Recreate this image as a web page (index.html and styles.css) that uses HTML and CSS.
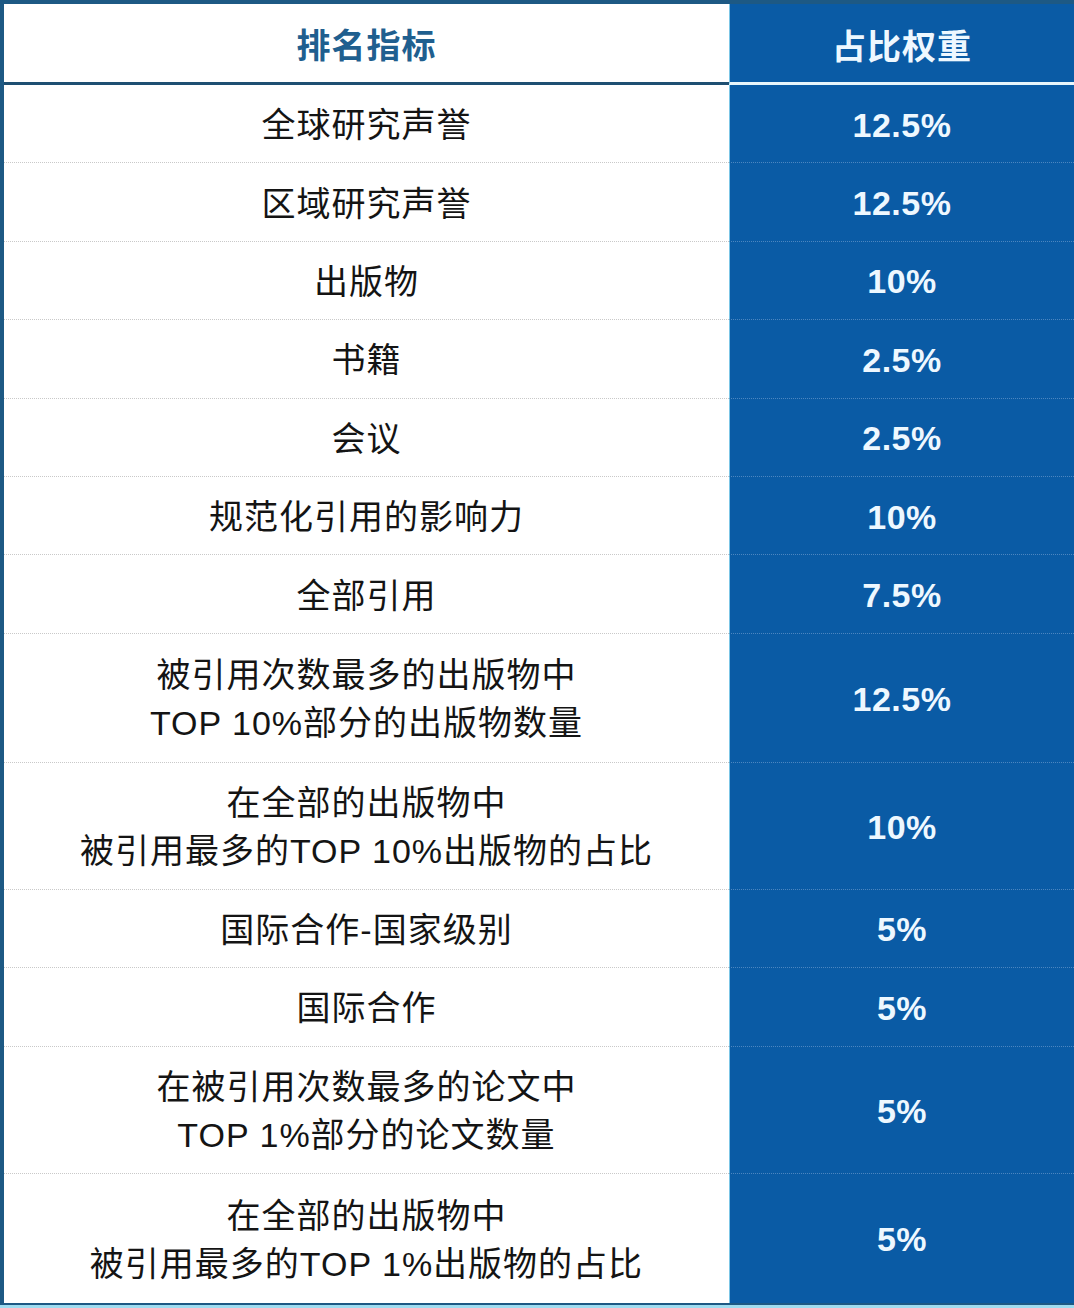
FILE: index.html
```html
<!DOCTYPE html>
<html lang="zh">
<head>
<meta charset="utf-8">
<title>排名指标</title>
<link rel="stylesheet" href="styles.css">
</head>
<body>
<div class="frame">
  <div class="table">
    <div class="head">
      <div class="cell name">排名指标</div>
      <div class="cell val">占比权重</div>
    </div>
    <div class="row"><div class="cell name">全球研究声誉</div><div class="cell val">12.5%</div></div>
    <div class="row"><div class="cell name">区域研究声誉</div><div class="cell val">12.5%</div></div>
    <div class="row"><div class="cell name">出版物</div><div class="cell val">10%</div></div>
    <div class="row"><div class="cell name">书籍</div><div class="cell val">2.5%</div></div>
    <div class="row"><div class="cell name">会议</div><div class="cell val">2.5%</div></div>
    <div class="row"><div class="cell name">规范化引用的影响力</div><div class="cell val">10%</div></div>
    <div class="row"><div class="cell name">全部引用</div><div class="cell val">7.5%</div></div>
    <div class="row two"><div class="cell name">被引用次数最多的出版物中<br>TOP 10%部分的出版物数量</div><div class="cell val">12.5%</div></div>
    <div class="row two b127"><div class="cell name">在全部的出版物中<br>被引用最多的TOP 10%出版物的占比</div><div class="cell val">10%</div></div>
    <div class="row"><div class="cell name">国际合作-国家级别</div><div class="cell val">5%</div></div>
    <div class="row"><div class="cell name">国际合作</div><div class="cell val">5%</div></div>
    <div class="row two b127"><div class="cell name">在被引用次数最多的论文中<br>TOP 1%部分的论文数量</div><div class="cell val">5%</div></div>
    <div class="row two last"><div class="cell name">在全部的出版物中<br>被引用最多的TOP 1%出版物的占比</div><div class="cell val">5%</div></div>
  </div>
</div>
</body>
</html>
```

FILE: styles.css
```css
html, body {
  margin: 0;
  padding: 0;
  background: #ffffff;
}

body {
  width: 1074px;
  height: 1308px;
  overflow: hidden;
  font-family: "Liberation Sans", "Noto Sans CJK SC", sans-serif;
}

.frame {
  width: 1074px;
  height: 1308px;
  box-sizing: border-box;
  border-bottom: 3px solid #9fdcf0;
}

.table {
  box-sizing: border-box;
  height: 1305px;
  border-top: 4px solid #1d5984;
  border-left: 4px solid #1d5984;
  border-bottom: 2px solid #1d5984;
  display: flex;
  flex-direction: column;
}

.head,
.row {
  display: grid;
  grid-template-columns: 725px 1fr;
}

.head {
  height: 81px;
}

.row {
  height: 78.4px;
}

.row.two {
  height: 129px;
}

.row.two.b127 {
  height: 127px;
}

.cell {
  display: flex;
  align-items: center;
  justify-content: center;
  text-align: center;
  box-sizing: border-box;
  padding-top: 3px;
}

.name {
  color: #141414;
  font-size: 34px;
  letter-spacing: 1px;
  line-height: 48px;
  border-bottom: 1px dotted #c9c9c9;
}

.val {
  background: #0a5ba5;
  color: #eef8ff;
  font-weight: bold;
  font-size: 34px;
  letter-spacing: 0.5px;
  border-left: 1px solid #7cc6e6;
  border-bottom: 1px dotted #4c86c0;
}

.head .name {
  color: #1f5f8f;
  font-weight: bold;
  font-size: 34px;
  letter-spacing: 1px;
  border-bottom: 3px solid #1e4f72;
  padding-top: 5px;
}

.head .val {
  font-size: 34px;
  letter-spacing: 1px;
  border-bottom: 3px solid #e8f6fc;
  padding-top: 3px;
}

.row.last .cell {
  border-bottom: none;
}
```
